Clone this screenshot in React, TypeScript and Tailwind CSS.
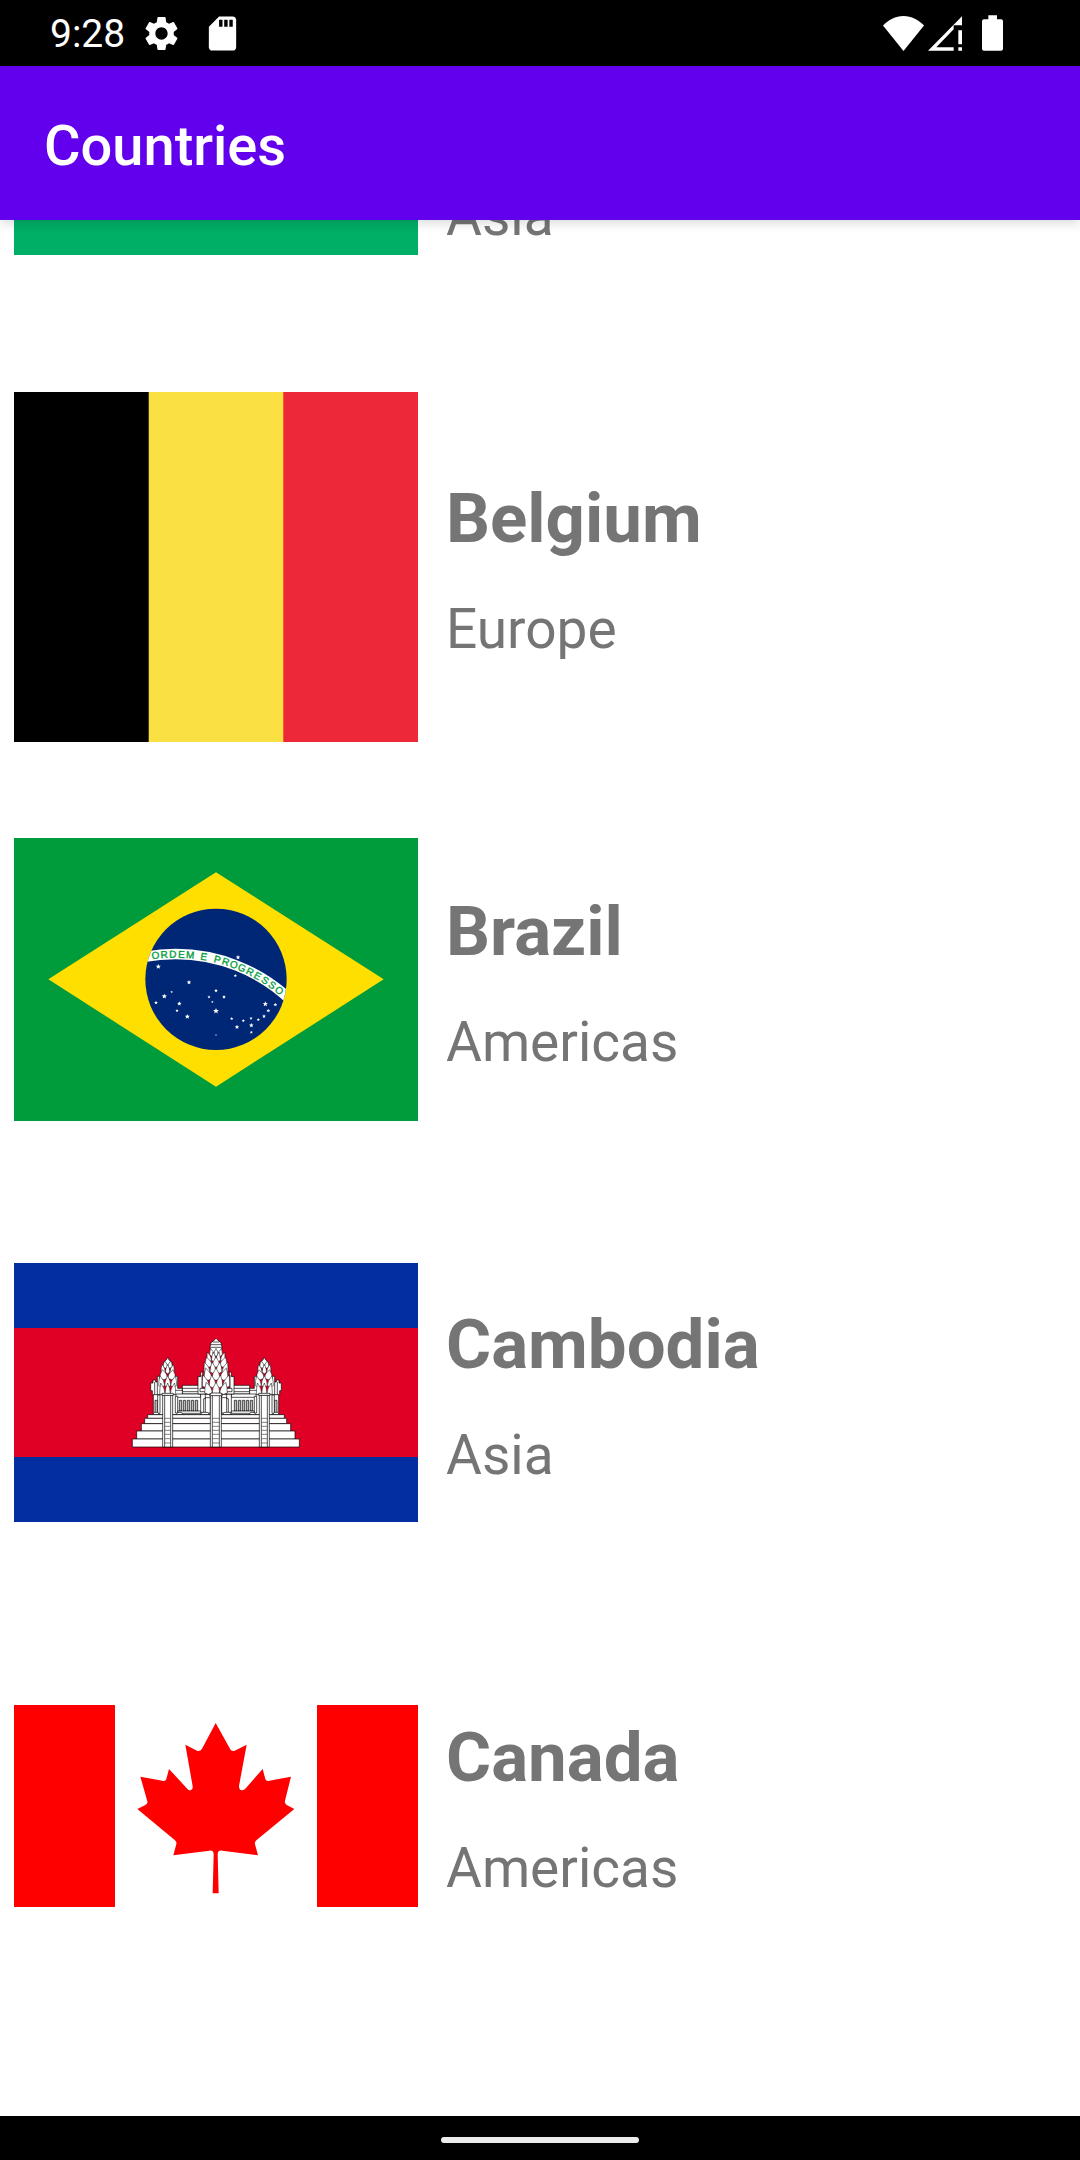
import { useLayoutEffect, useRef } from "react";
import type { ReactNode } from "react";
import { MdSdCard, MdSettings } from "react-icons/md";

function StatusBar() {
  return (
    <div className="flex h-[66px] shrink-0 items-center justify-between bg-black pr-[77px] pl-[50px] text-white">
      <div className="flex items-center gap-5">
        <div className="flex items-center gap-4">
          <time className="pt-[2px] text-[39px] leading-[46px]">9:28</time>
          <MdSettings className="size-[41px]" aria-label="Settings" />
        </div>
        <MdSdCard className="size-[41px]" aria-label="SD card" />
      </div>
      <div className="flex items-center gap-5">
        <div className="flex items-center gap-1">
          <svg viewBox="0 0 122 104" className="h-[35px] w-[41px] fill-white" aria-label="Wi-Fi">
            <path d="M61 104 0 28C16 12 37 0 61 0s45 12 61 28Z" />
          </svg>
          <svg viewBox="0 0 102 104" className="h-[35px] w-[34px] fill-white" aria-label="Mobile signal">
            <path d="M102 0v27H77v12L25 93h52v11H0Z" />
            <path d="M91 42h11v42H91zM91 93h11v11H91z" />
          </svg>
        </div>
        <svg viewBox="0 0 63 107" className="h-9 w-[21px] fill-white" aria-label="Battery">
          <path d="M19 0h26v12h12a6 6 0 0 1 6 6v83a6 6 0 0 1-6 6H6a6 6 0 0 1-6-6V18a6 6 0 0 1 6-6h13Z" />
        </svg>
      </div>
    </div>
  );
}

function AzerbaijanFlag() {
  return (
    <svg viewBox="0 0 404 202" className="w-full" role="img" aria-label="Flag of Azerbaijan">
      <path fill="#0092bc" d="M0 0h404v68H0z" />
      <path fill="#e4002b" d="M0 67h404v68H0z" />
      <path fill="#00af66" d="M0 135h404v67H0z" />
    </svg>
  );
}

function BelgiumFlag() {
  return (
    <svg viewBox="0 0 404 350" className="w-full" role="img" aria-label="Flag of Belgium">
      <path fill="#ed2939" d="M0 0h404v350H0z" />
      <path fill="#fae042" d="M0 0h269.300v350H0z" />
      <path fill="#000" d="M0 0h134.700v350H0z" />
    </svg>
  );
}

const STARS = [
  [85, 230, 8], [177, 277, 7], [103, 319, 8], [125, 306, 4], [78, 338, 6], [148, 341, 7],
  [141, 362, 5], [172, 380, 8], [258, 302, 6], [237, 321, 5], [282, 321, 6], [247, 336, 4],
  [258, 363, 9], [324, 202, 7], [316, 257, 5], [305, 386, 5], [321, 411, 7], [340, 392, 5],
  [363, 385, 5], [364, 406, 7], [364, 427, 5], [385, 389, 5], [402, 379, 6], [415, 362, 6],
  [406, 342, 8], [436, 344, 6], [258, 435, 3],
];

const MOTTO: [string, number][] = [
  ["O", -7], ["R", -4], ["D", -1], ["E", 2], ["M", 5], ["E", 9.75], ["P", 14.5], ["R", 17.5],
  ["O", 20.5], ["G", 23.5], ["R", 26.5], ["E", 29.5], ["S", 32.5], ["S", 35.5], ["O", 38.5],
];

function starPoints(cx: number, cy: number, r: number) {
  return Array.from({ length: 10 }, (_, i) => {
    const radius = i % 2 ? r * 0.45 : r;
    const a = (i * Math.PI) / 5;
    return `${cx + radius * Math.sin(a)},${cy - radius * Math.cos(a)}`;
  }).join(" ");
}

function BrazilFlag() {
  return (
    <svg viewBox="0 0 1212 849" className="w-full" role="img" aria-label="Flag of Brazil">
      <clipPath id="globe">
        <circle cx="606" cy="424" r="212" />
      </clipPath>
      <path fill="#009c3b" d="M0 0h1212v849H0z" />
      <path fill="#ffdf00" d="M606 103 1109 424 606 746 103 424Z" />
      <circle cx="606" cy="424" r="212" fill="#002776" />
      <circle cx="485" cy="848" r="500" fill="none" stroke="#fff" strokeWidth="31" clipPath="url(#globe)" />
      <g
        fill="#009c3b"
        stroke="#009c3b"
        strokeWidth="1"
        fontSize="30"
        fontFamily="Liberation Sans, sans-serif"
        textAnchor="middle"
      >
        {MOTTO.map(([letter, angle]) => (
          <text key={angle} x="485" y="359" transform={`rotate(${angle} 485 848)`}>
            {letter}
          </text>
        ))}
      </g>
      <g transform="translate(348 156)" fill="#fff">
        {STARS.map(([x, y, r]) => (
          <polygon key={`${x}-${y}`} points={starPoints(x, y, r)} />
        ))}
      </g>
    </svg>
  );
}

type Tier = { y: number; half: number; count: number; h: number };

const CENTRE_TIERS: Tier[] = [
  { y: 90, half: 19, count: 3, h: 20 },
  { y: 106, half: 27, count: 4, h: 25 },
  { y: 123, half: 33, count: 3, h: 27 },
  { y: 141, half: 36, count: 4, h: 30 },
  { y: 162, half: 36, count: 3, h: 33 },
  { y: 184, half: 41, count: 4, h: 34 },
  { y: 204, half: 34, count: 3, h: 32 },
];

const SIDE_TIERS: Tier[] = [
  { y: 126, half: 14, count: 2, h: 18 },
  { y: 142, half: 20, count: 3, h: 24 },
  { y: 160, half: 24, count: 2, h: 26 },
  { y: 182, half: 27, count: 3, h: 30 },
  { y: 206, half: 24, count: 3, h: 32 },
];

function Petals({ cx, tiers }: { cx: number; tiers: Tier[] }) {
  return (
    <g strokeWidth="1.5">
      {tiers.flatMap(({ y, half, count, h }) =>
        Array.from({ length: count }, (_, i) => {
          const w = half / count;
          const x = cx - half + w + i * 2 * w;
          const tip = x + (x - cx) * 0.3;
          return (
            <path
              key={`${y}-${i}`}
              d={`M${x - w} ${y}Q${x - w} ${y - h * 0.5} ${tip} ${y - h}Q${x + w} ${y - h * 0.5} ${x + w} ${y}L${x} ${y + 4}Z`}
            />
          );
        }),
      )}
    </g>
  );
}

function Wing() {
  return (
    <g>
      <path d="M100 208h171v61H100z" />
      <path d="M187 181h52v26h-52z" />
      <path d="M187 190h52M187 200h52" fill="none" />
      <path d="M92 174h7v-9h8v6h8v38H97v-12h-5z" />
      <path d="M104 171v38" fill="none" />
      <path d="M112 154h8v24h6v31h-14zM166 154h7v36h14v19h-27v-31h6z" />
      <path d="M167 196h20" fill="none" />
      <path d="M168 207h74v10h-74z" />
      <path d="M105 226h8v38h-8z" fill="#bbb" />
      <path d="M113 210h7v55h-7zM166 214h7v50h-7z" />
      {[178, 190, 202, 214, 226].map((x) => (
        <path key={x} d={`M${x} 226h7v32h-7z`} fill="#bbb" />
      ))}
      <path d="M173 258h69v7h-69z" />
      <path d="M242 207h14v14h-5v41h-9zM256 218h15v46h-15z" />
      <path d="M234 155h8v-14h6v14h8v52h-22zM246 150v40h18" />
      <path d="M240 190h31v10h-31z" />
      <path d="M97 269l6-7h10l5 7zM168 269l6-7h10l5 7zM240 269l8-7h14l8 7z" />
    </g>
  );
}

function Stair({ x, width }: { x: number; width: number }) {
  return (
    <g>
      <path d={`M${x} 210h${width}v156h-${width}z`} />
      <path d={`M${x + 6} 210v156M${x + width - 6} 210v156`} />
      <g stroke="#444">
        {[280, 292, 304, 316, 328, 341, 354].map((y) => (
          <path key={y} d={`M${x + 6} ${y}h${width - 12}`} />
        ))}
      </g>
    </g>
  );
}

function CambodiaFlag() {
  return (
    <svg viewBox="0 0 1212 777" className="w-full" role="img" aria-label="Flag of Cambodia">
      <path fill="#032ea1" d="M0 0h1212v777H0z" />
      <path fill="#e00025" d="M0 195h1212v387H0z" />
      <g transform="translate(318 186)" fill="#fff" stroke="#000" strokeWidth="2">
        <Wing />
        <g transform="translate(576 0) scale(-1 1)">
          <Wing />
        </g>
        <path d="M83 269h410v11H83z" />
        <path d="M74 280h426v16H74z" />
        <path d="M64 296h448v22H64z" />
        <path d="M50 318h475v24H50z" />
        <path d="M37 342h501v24H37z" />
        <Stair x={128} width={30} />
        <Stair x={271} width={33} />
        <Stair x={418} width={30} />
        <path d="M143 97l5 9 8 5-2 16h-22l-2-16 8-5z" />
        <path d="M433 97l5 9 8 5-2 16h-22l-2-16 8-5z" />
        <Petals cx={143} tiers={SIDE_TIERS} />
        <Petals cx={433} tiers={SIDE_TIERS} />
        <path d="M288 40l7 7 8 6 3 14-3 20h-30l-3-20 3-14 8-6z" />
        <path d="M278 51h20M273 59h30M271 67h34" fill="none" />
        <Petals cx={288} tiers={CENTRE_TIERS} />
        <path d="M273 204h30l4 8h-38zM126 205h34v6h-34zM416 205h34v6h-34z" />
      </g>
    </svg>
  );
}

function CanadaFlag() {
  return (
    <svg viewBox="0 0 1212 606" className="w-full" role="img" aria-label="Flag of Canada">
      <path fill="#fff" d="M0 0h1212v606H0z" />
      <path fill="#f00" d="M0 0h303v606H0zM909 0h303v606H909z" />
      <path
        fill="#f00"
        d="M605 54 648 131Q652 140 662 137L698 119 675 243Q675 255 683 256 689 256 694 251L746 192 754 222Q757 230 766 227L831 215 813 287Q811 294 817 299L841 312 728 405Q721 411 723 418L732 451 625 437Q612 435 611 447L614 565H596L599 447Q598 435 586 437L478 451 487 417Q489 410 482 405L370 312 394 300Q402 297 400 289L379 215 445 227Q454 230 457 222L465 192 517 248Q523 257 530 256 537 255 536 244L514 119 549 137Q558 141 564 131Z"
      />
    </svg>
  );
}

type Country = { name: string; region: string; flag: ReactNode };

const COUNTRIES: Country[] = [
  { name: "Azerbaijan", region: "Asia", flag: <AzerbaijanFlag /> },
  { name: "Belgium", region: "Europe", flag: <BelgiumFlag /> },
  { name: "Brazil", region: "Americas", flag: <BrazilFlag /> },
  { name: "Cambodia", region: "Asia", flag: <CambodiaFlag /> },
  { name: "Canada", region: "Americas", flag: <CanadaFlag /> },
];

function CountryRow({ name, region, flag }: Country) {
  return (
    <li className="flex h-[413px] items-center gap-7 px-[14px]">
      <div className="w-[404px] shrink-0">{flag}</div>
      <div className="flex min-w-0 flex-1 flex-col gap-8 pt-[2px] text-[#757575]">
        <h2 className="text-[69px] leading-[92px] font-bold">{name}</h2>
        <p className="text-[55px] leading-[65px]">{region}</p>
      </div>
    </li>
  );
}

const INITIAL_SCROLL = 273;

export default function App() {
  const list = useRef<HTMLElement>(null);

  useLayoutEffect(() => {
    if (list.current) list.current.scrollTop = INITIAL_SCROLL;
  }, []);

  return (
    <div className="flex h-screen flex-col bg-white font-[Roboto,sans-serif]">
      <StatusBar />
      <header className="z-10 flex h-[154px] shrink-0 items-center bg-[#6200ee] px-11 pt-[6px] shadow-[0_3px_11px_rgba(0,0,0,0.15)]">
        <h1 className="text-[56px] leading-[65px] font-medium text-white">Countries</h1>
      </header>
      <main ref={list} className="min-h-0 flex-1 overflow-y-auto [scrollbar-width:none]">
        <ul className="pb-44">
          {COUNTRIES.map((country) => (
            <CountryRow key={country.name} {...country} />
          ))}
        </ul>
      </main>
      <footer className="flex h-11 shrink-0 items-center justify-center bg-black pt-1">
        <div className="h-[6px] w-[198px] rounded-full bg-[#ececec]" />
      </footer>
    </div>
  );
}
